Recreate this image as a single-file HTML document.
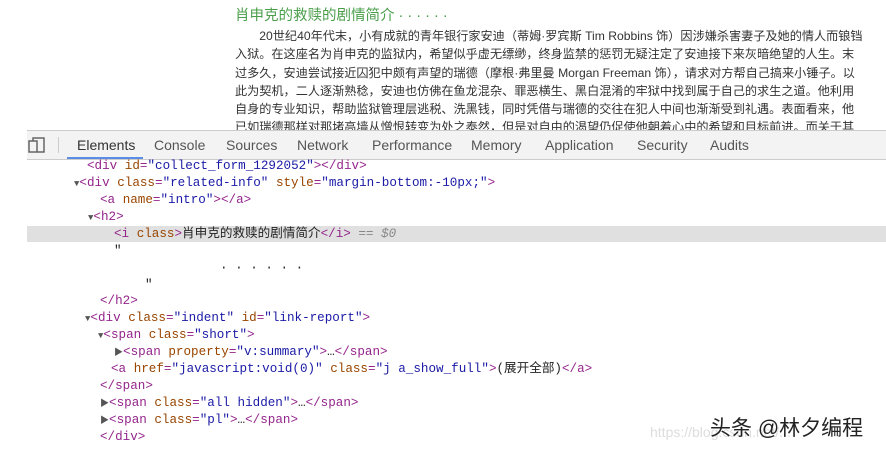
<!DOCTYPE html>
<html><head><meta charset="utf-8"><style>
body{margin:0;width:886px;height:452px;overflow:hidden;background:#fff;position:relative;font-family:"Liberation Sans","Noto Sans CJK SC",sans-serif}
.t{position:absolute;left:235px;top:4px;color:#4a9e4a;font-size:14.5px;white-space:nowrap}
.p{position:absolute;left:235px;top:27px;font-size:12.15px;line-height:18.3px;color:#333}
.p div{white-space:nowrap}
.bar{position:absolute;left:27px;top:130px;width:859px;height:28px;background:#f3f3f3;border-top:1px solid #ccc;border-bottom:1px solid #ccc}
.tab{position:absolute;top:6px;font-size:14px;color:#555}
.ul{position:absolute;left:40px;top:26px;width:76px;height:2px;background:#5a8ee6}
.code{position:absolute;left:0;top:158px;width:886px;font-family:"Liberation Mono","Noto Sans CJK SC",monospace;font-size:12.6px;}
.l{position:absolute;height:17px;line-height:17px;white-space:pre;overflow:visible}
.g{color:#94258c}.a{color:#994500}.v{color:#1a1aa6}.k{color:#222}
.hl{position:absolute;left:27px;top:68px;width:859px;height:16px;background:#e0e0e0}
.arr{font-size:9px;color:#555}
.wm{position:absolute;left:710px;top:412px;font-size:21px;color:#222}
.wm2{position:absolute;left:650px;top:424px;font-size:14px;color:#ddd}
</style></head><body>
<div class="t">肖申克的救赎的剧情简介 · · · · · ·</div>
<div class="p">
<div>&#12288;&#12288;20世纪40年代末，小有成就的青年银行家安迪（蒂姆·罗宾斯 Tim Robbins 饰）因涉嫌杀害妻子及她的情人而锒铛</div>
<div>入狱。在这座名为肖申克的监狱内，希望似乎虚无缥缈，终身监禁的惩罚无疑注定了安迪接下来灰暗绝望的人生。末</div>
<div>过多久，安迪尝试接近囚犯中颇有声望的瑞德（摩根·弗里曼 Morgan Freeman 饰），请求对方帮自己搞来小锤子。以</div>
<div>此为契机，二人逐渐熟稔，安迪也仿佛在鱼龙混杂、罪恶横生、黑白混淆的牢狱中找到属于自己的求生之道。他利用</div>
<div>自身的专业知识，帮助监狱管理层逃税、洗黑钱，同时凭借与瑞德的交往在犯人中间也渐渐受到礼遇。表面看来，他</div>
<div>已如瑞德那样对那堵高墙从憎恨转变为处之泰然，但是对自由的渴望仍促使他朝着心中的希望和目标前进。而关于其</div>
</div>
<div class="bar">
<svg style="position:absolute;left:1px;top:6px" width="18" height="16"><rect x="1" y="4" width="8" height="11" fill="none" stroke="#666" stroke-width="1.5"/><path d="M5 4V1H16V15H9" fill="none" stroke="#666" stroke-width="1.5"/></svg>
<div style="position:absolute;left:31px;top:6px;width:1px;height:16px;background:#ccc"></div>
<span class="tab" style="left:50px;color:#333">Elements</span>
<span class="tab" style="left:127px">Console</span>
<span class="tab" style="left:199px">Sources</span>
<span class="tab" style="left:270px">Network</span>
<span class="tab" style="left:345px">Performance</span>
<span class="tab" style="left:444px">Memory</span>
<span class="tab" style="left:518px">Application</span>
<span class="tab" style="left:610px">Security</span>
<span class="tab" style="left:683px">Audits</span>
<div class="ul"></div>
</div>
<div class="code">
<div class="hl"></div>
<div class="l" style="left:87px;top:0"><span class="g">&lt;div </span><span class="a">id</span><span class="g">=</span><span class="v">"collect_form_1292052"</span><span class="g">&gt;&lt;/div&gt;</span></div>
<div class="l" style="left:74px;top:17px"><span class="arr">▼</span><span class="g">&lt;div </span><span class="a">class</span><span class="g">=</span><span class="v">"related-info"</span> <span class="a">style</span><span class="g">=</span><span class="v">"margin-bottom:-10px;"</span><span class="g">&gt;</span></div>
<div class="l" style="left:100px;top:34px"><span class="g">&lt;a </span><span class="a">name</span><span class="g">=</span><span class="v">"intro"</span><span class="g">&gt;&lt;/a&gt;</span></div>
<div class="l" style="left:88px;top:51px"><span class="arr">▼</span><span class="g">&lt;h2&gt;</span></div>
<div class="l" style="left:114px;top:68px"><span class="g">&lt;i </span><span class="a">class</span><span class="g">&gt;</span><span class="k">肖申克的救赎的剧情简介</span><span class="g">&lt;/i&gt;</span> <i style="color:#888">== $0</i></div>
<div class="l k" style="left:114px;top:85px">"</div>
<div class="l k" style="left:220px;top:102px">· · · · · ·</div>
<div class="l k" style="left:145px;top:119px">"</div>
<div class="l" style="left:100px;top:135px"><span class="g">&lt;/h2&gt;</span></div>
<div class="l" style="left:85px;top:152px"><span class="arr">▼</span><span class="g">&lt;div </span><span class="a">class</span><span class="g">=</span><span class="v">"indent"</span> <span class="a">id</span><span class="g">=</span><span class="v">"link-report"</span><span class="g">&gt;</span></div>
<div class="l" style="left:98px;top:169px"><span class="arr">▼</span><span class="g">&lt;span </span><span class="a">class</span><span class="g">=</span><span class="v">"short"</span><span class="g">&gt;</span></div>
<div class="l" style="left:114px;top:186px"><span class="arr">▶</span><span class="g">&lt;span </span><span class="a">property</span><span class="g">=</span><span class="v">"v:summary"</span><span class="g">&gt;</span><span class="k">…</span><span class="g">&lt;/span&gt;</span></div>
<div class="l" style="left:111px;top:203px"><span class="g">&lt;a </span><span class="a">href</span><span class="g">=</span><span class="v">"javascript:void(0)"</span> <span class="a">class</span><span class="g">=</span><span class="v">"j a_show_full"</span><span class="g">&gt;</span><span class="k">(展开全部)</span><span class="g">&lt;/a&gt;</span></div>
<div class="l" style="left:100px;top:220px"><span class="g">&lt;/span&gt;</span></div>
<div class="l" style="left:100px;top:237px"><span class="arr">▶</span><span class="g">&lt;span </span><span class="a">class</span><span class="g">=</span><span class="v">"all hidden"</span><span class="g">&gt;</span><span class="k">…</span><span class="g">&lt;/span&gt;</span></div>
<div class="l" style="left:100px;top:254px"><span class="arr">▶</span><span class="g">&lt;span </span><span class="a">class</span><span class="g">=</span><span class="v">"pl"</span><span class="g">&gt;</span><span class="k">…</span><span class="g">&lt;/span&gt;</span></div>
<div class="l" style="left:100px;top:271px"><span class="g">&lt;/div&gt;</span></div>
</div>
<div class="wm2">https://blog.csdn.net/...</div>
<div class="wm">头条 @林夕编程</div>
</body></html>
